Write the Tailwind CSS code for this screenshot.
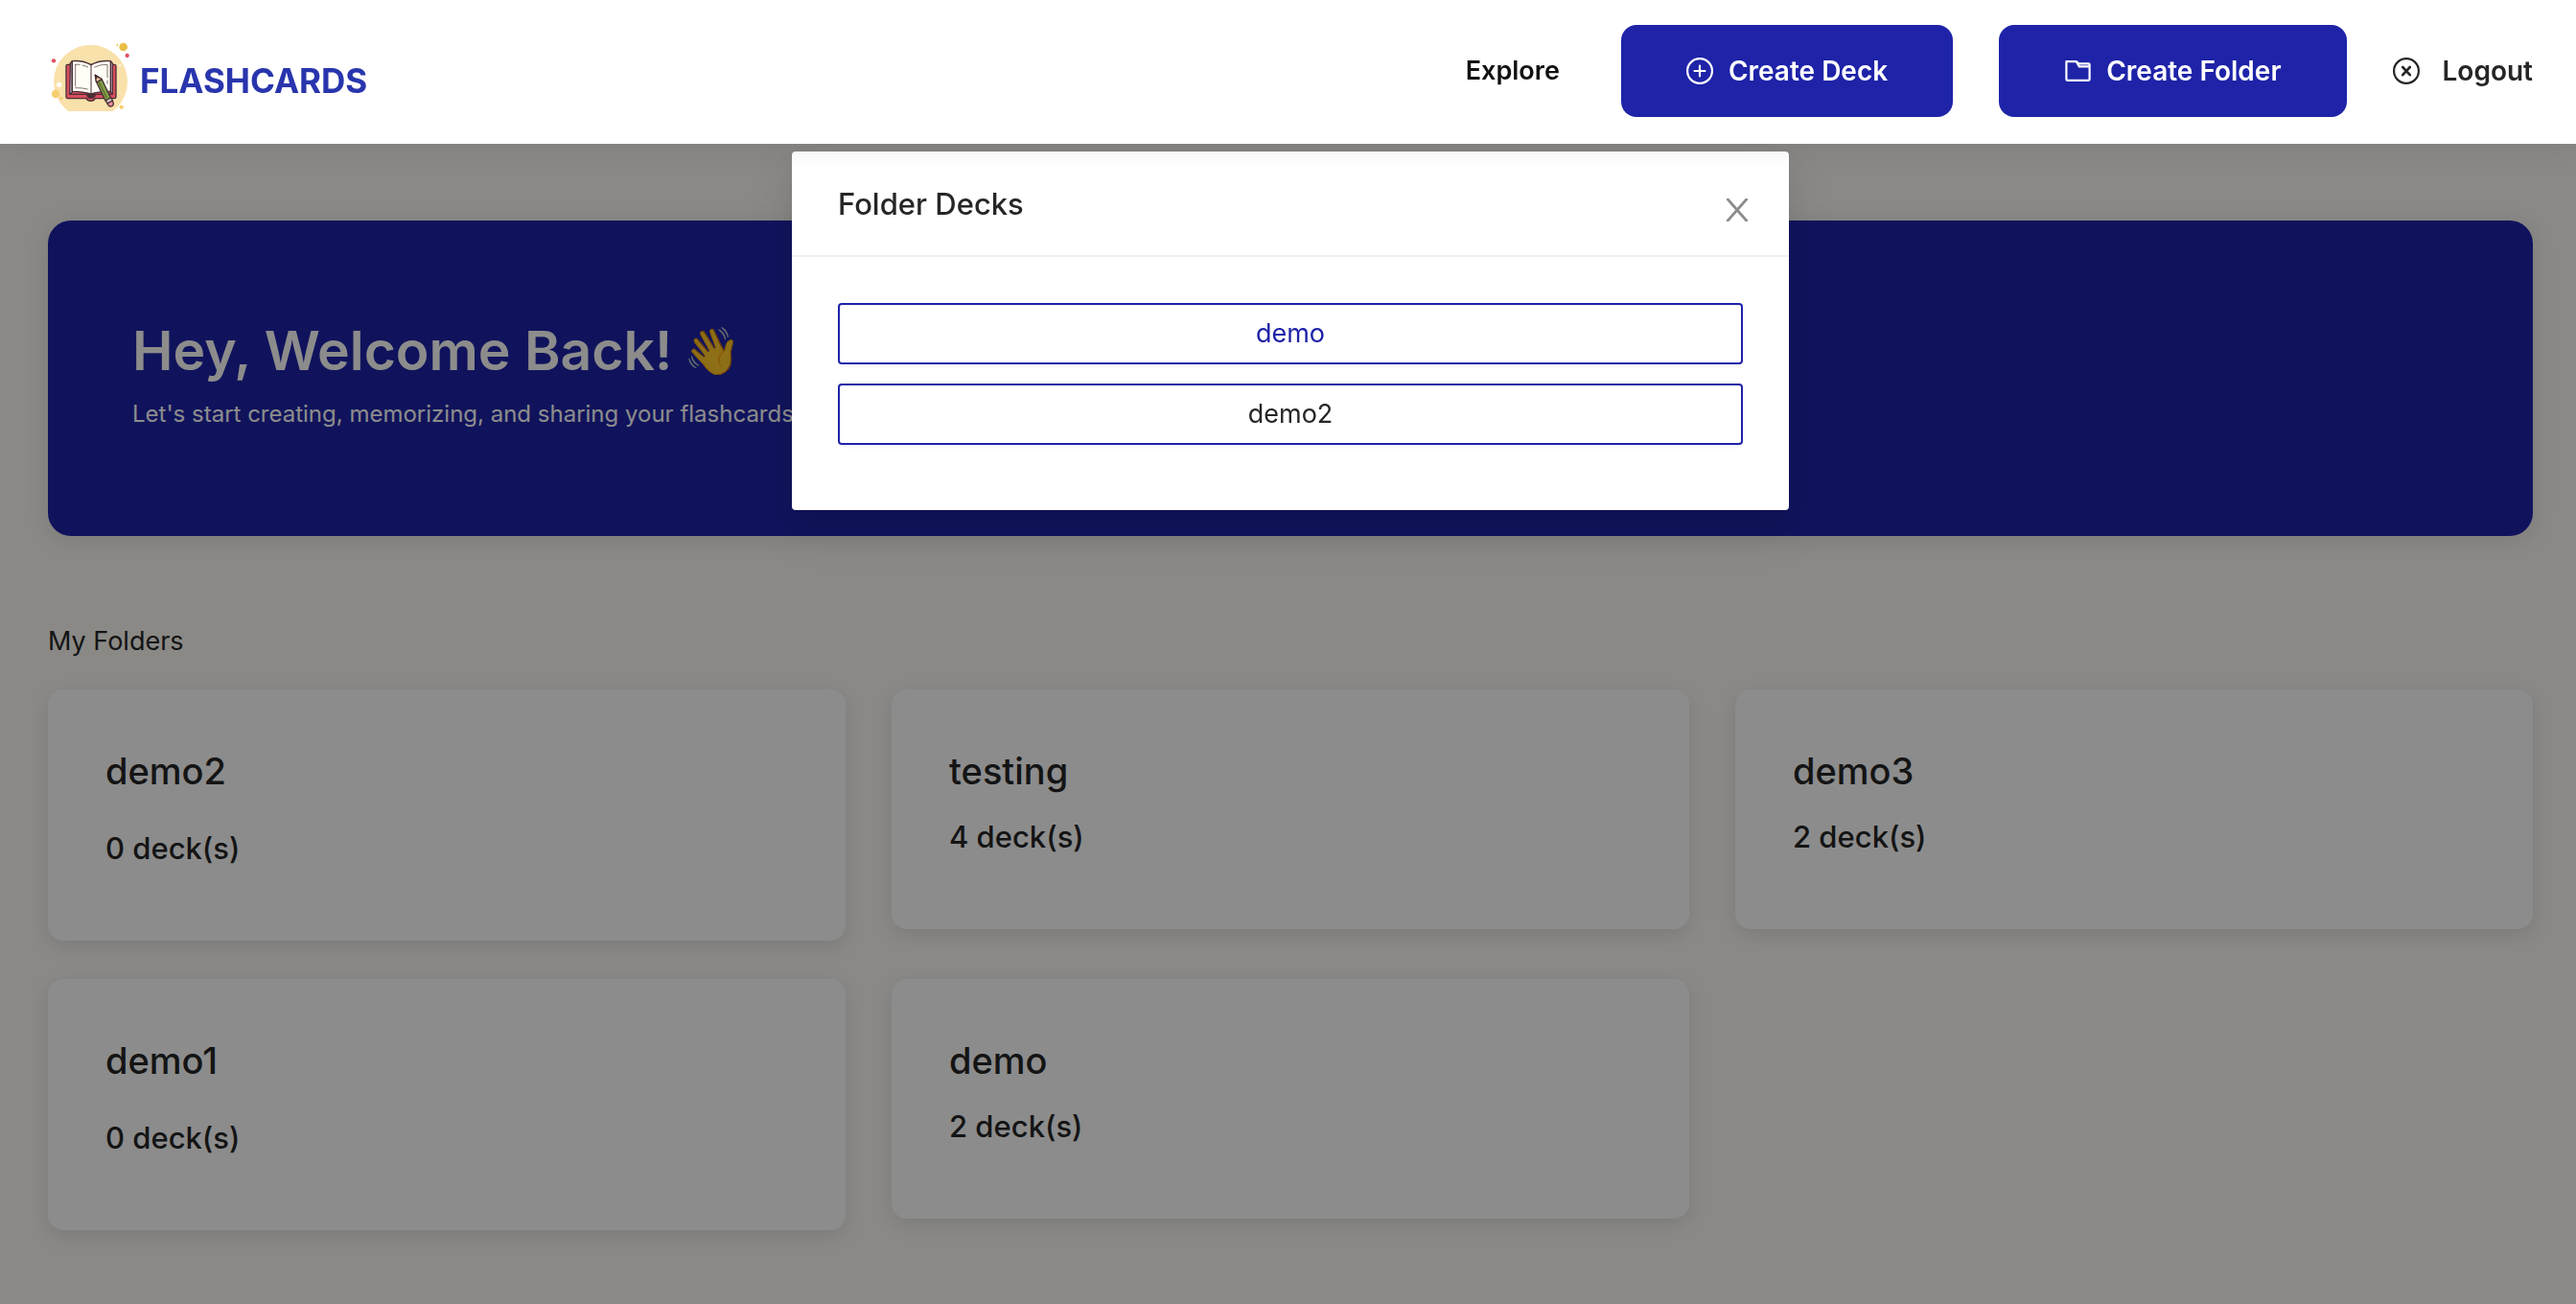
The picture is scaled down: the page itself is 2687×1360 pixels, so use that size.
<!DOCTYPE html>
<html lang="en">
<head>
<meta charset="utf-8">
<meta name="viewport" content="width=device-width, initial-scale=1">
<title>Flashcards</title>
<script src="https://cdn.jsdelivr.net/npm/@tailwindcss/browser@4"></script>
</head>
<body class="min-h-screen bg-[#fbf9f5] font-['Inter',sans-serif] text-[27px] text-[#262626]">

<header class="relative z-30 flex h-[150px] items-center justify-between bg-white pr-[45px] pb-0.5 pl-[50px] shadow-[0_4px_30px_rgba(0,0,0,0.08)]">
  <a href="#" class="flex items-center pt-5 text-[35px] font-bold text-[#2935ad]">
    <svg class="h-[92px] w-24" viewBox="0 0 288 276" aria-hidden="true">
      <defs><clipPath id="crop"><rect width="288" height="234"/></clipPath></defs>
      <g clip-path="url(#crop)">
        <circle cx="133.500" cy="142" r="115.500" fill="#f9e1ab"/>
        <circle cx="236" cy="33" r="13" fill="#eabf47"/>
        <circle cx="217" cy="27" r="3" fill="#eabf47"/>
        <circle cx="248" cy="60" r="6.500" fill="#e0505f"/>
        <circle cx="18" cy="76" r="6.500" fill="#e0505f"/>
        <circle cx="35" cy="151" r="8" fill="#fff"/>
        <circle cx="226" cy="91" r="4" fill="#fdf3da"/>
        <circle cx="24" cy="180" r="12.500" fill="#f5cf70"/>
        <circle cx="42" cy="193" r="3.500" fill="#f0c04a"/>
        <circle cx="230" cy="221" r="6.500" fill="#f5cf70"/>
        <g stroke="#4a2f35" stroke-width="4" stroke-linejoin="round" stroke-linecap="round">
          <path d="M62 88h-1q-4 0-4 5v96q0 5 5 5h58q4 8 14 8t14-8h60q5 0 5-5V93q0-5-5-5z" fill="#d94e5f"/>
          <path d="M122 181h26q-2 12-13 12t-13-12z" fill="#4a2f35"/>
          <path d="M70 84l6-7v98l-8 6h134l-6-6V77l6 7v97H68z" fill="#cdbfd0"/>
          <path d="M76 77q34-3 59 12q25-15 61-12v95q-36-1-61 8q-25-8-59-8z" fill="#fffef6"/>
          <path d="M135 89v90" fill="none" stroke-width="3"/>
          <path d="M86 88v68M86 88q8-1 14 0M108 90q10 2 17 6M86 161q20-1 38 4M146 96q18-9 40-8v40M186 138v10" fill="none" stroke-width="2"/>
          <path d="M148 121l4 22l29 60l17-8l-29-60z" fill="#7ea043"/>
          <path d="M148 121l3 21q7 2 9-4q7 0 9-4z" fill="#f0c8a0"/>
          <path d="M160 144l24 48" fill="none" stroke-width="2"/>
          <path d="M181 200l17-8l4 9l-16 9z" fill="#d6d0d4"/>
          <path d="M186 210l16-9q7 13-2 17q-9 4-14-8z" fill="#ee8e9c"/>
          <path d="M148 121l2 9l5-3z" fill="#4a2f35"/>
        </g>
      </g>
    </svg>
    <span>FLASHCARDS</span>
  </a>
  <nav class="flex items-center gap-12 font-semibold">
    <a href="#" class="mr-4 text-[#111]">Explore</a>
    <button type="button" class="flex h-24 items-center gap-4 rounded-2xl bg-[#1e23a8] px-17 text-[28px] text-white">
      <svg class="size-7" viewBox="0 0 28 28" fill="none" stroke="currentColor" stroke-width="2.200" stroke-linecap="round" aria-hidden="true"><circle cx="14" cy="14" r="12.900"/><path d="M14 8.500v11M8.500 14h11"/></svg>
      Create Deck
    </button>
    <button type="button" class="flex h-24 items-center gap-4 rounded-2xl bg-[#1e23a8] px-17 text-[28px] text-white">
      <svg class="size-7" viewBox="0 0 28 28" fill="none" stroke="currentColor" stroke-width="2.200" stroke-linejoin="round" aria-hidden="true"><path d="M2.400 4.100h10.400l2.600 2.200h10.200q1 0 1 1v15.500q0 1-1 1H3.400q-1 0-1-1V5.100q0-1 1-1zM12.800 4.300l3 5.100h10.600"/></svg>
      Create Folder
    </button>
    <button type="button" class="flex items-center gap-6 text-[28px]">
      <svg class="size-7" viewBox="0 0 28 28" fill="none" stroke="currentColor" stroke-width="2.200" stroke-linecap="round" aria-hidden="true"><circle cx="14" cy="14" r="12.900"/><path d="M10.200 10l7.600 8.200M17.800 10l-7.600 8.200" stroke-width="2.600"/></svg>
      Logout
    </button>
  </nav>
</header>

<main class="pt-20 pr-[45px] pb-10 pl-[50px]">
  <section class="rounded-3xl bg-[#1e23a8] pt-[94px] pr-22 pb-[111px] pl-22 text-white shadow-[0_4px_24px_rgba(0,0,0,0.10)]">
    <h1 class="flex items-center gap-3 text-[57px] leading-[84px] font-semibold">Hey, Welcome Back! <span class="text-[48px]">👋</span></h1>
    <p class="mt-2 text-2xl leading-8">Let's start creating, memorizing, and sharing your flashcards.</p>
  </section>

  <h2 class="mt-22 mb-7 leading-[44px]">My Folders</h2>
  <div class="grid grid-cols-3 items-start gap-x-12 gap-y-10 font-medium">
    <article class="rounded-2xl bg-white px-[60px] pt-[55px] pb-18 shadow-[0_6px_20px_rgba(0,0,0,0.10)]">
      <h3 class="text-[38px] leading-[60px]">demo2</h3>
      <p class="mt-[27px] text-[31px] leading-[48px]">0 deck(s)</p>
    </article>
    <article class="rounded-2xl bg-white px-[60px] pt-[55px] pb-18 shadow-[0_6px_20px_rgba(0,0,0,0.10)]">
      <h3 class="text-[38px] leading-[60px]">testing</h3>
      <p class="mt-[15px] text-[31px] leading-[48px]">4 deck(s)</p>
    </article>
    <article class="rounded-2xl bg-white px-[60px] pt-[55px] pb-18 shadow-[0_6px_20px_rgba(0,0,0,0.10)]">
      <h3 class="text-[38px] leading-[60px]">demo3</h3>
      <p class="mt-[15px] text-[31px] leading-[48px]">2 deck(s)</p>
    </article>
    <article class="rounded-2xl bg-white px-[60px] pt-[55px] pb-18 shadow-[0_6px_20px_rgba(0,0,0,0.10)]">
      <h3 class="text-[38px] leading-[60px]">demo1</h3>
      <p class="mt-[27px] text-[31px] leading-[48px]">0 deck(s)</p>
    </article>
    <article class="rounded-2xl bg-white px-[60px] pt-[55px] pb-18 shadow-[0_6px_20px_rgba(0,0,0,0.10)]">
      <h3 class="text-[38px] leading-[60px]">demo</h3>
      <p class="mt-[15px] text-[31px] leading-[48px]">2 deck(s)</p>
    </article>
  </div>
</main>

<!-- Dimmed backdrop with the folder dialog -->
<div class="fixed inset-0 z-20 bg-black/45 pt-[158px] pr-[45px] pl-[50px]">
  <div role="dialog" aria-modal="true" aria-labelledby="dialog-title" class="relative mx-auto w-[1040px] max-w-full rounded-sm bg-white shadow-[0_6px_12px_-8px_rgba(0,0,0,0.12),0_12px_32px_0_rgba(0,0,0,0.08),0_18px_56px_16px_rgba(0,0,0,0.05)]">
    <div class="border-b-2 border-[#f0f0f0] px-12 pt-[33px] pb-[31px]">
      <h2 id="dialog-title" class="text-[31px] leading-[44px] font-medium">Folder Decks</h2>
    </div>
    <button type="button" aria-label="Close" class="absolute top-[7px] right-0 flex size-27 items-center justify-center text-[#8c8c8c]">
      <svg class="size-6" viewBox="0 0 24 24" fill="none" stroke="currentColor" stroke-width="2.800" aria-hidden="true"><path d="M1.500 0l21 24M22.500 0l-21 24"/></svg>
    </button>
    <div class="px-12 pt-12 pb-17">
      <div class="flex flex-col gap-5">
        <button type="button" class="h-16 rounded-sm border-2 border-[#1e23a8] text-[#1e23a8] shadow-[0_4px_0_rgba(0,0,0,0.015)]">demo</button>
        <button type="button" class="h-16 rounded-sm border-2 border-[#1e23a8] shadow-[0_4px_0_rgba(0,0,0,0.015)]">demo2</button>
      </div>
    </div>
  </div>
</div>
</body>
</html>
